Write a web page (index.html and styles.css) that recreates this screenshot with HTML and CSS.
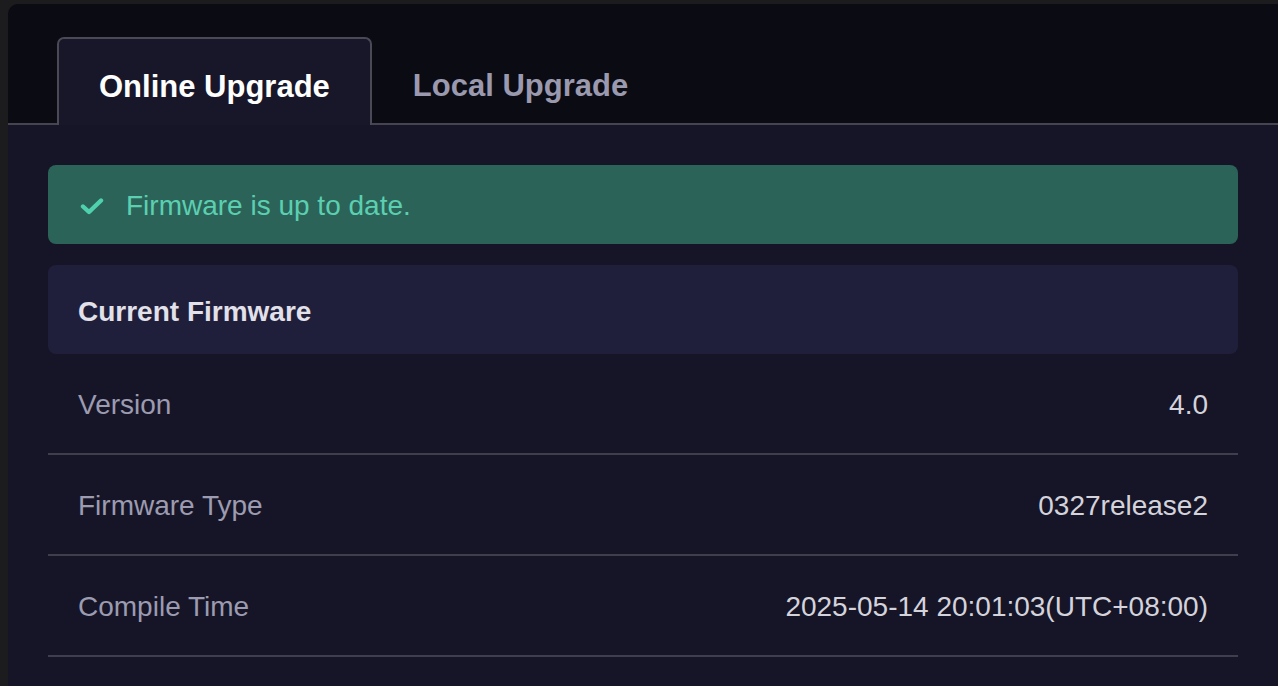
FILE: index.html
```html
<!DOCTYPE html>
<html lang="en">
<head>
<meta charset="UTF-8">
<meta name="viewport" content="width=device-width, initial-scale=1.0">
<title>Firmware Upgrade</title>
<link rel="stylesheet" href="styles.css">
</head>
<body>
    <div class="panel">
        <!-- Tabs -->
        <div class="tab-bar">
            <div class="tab active">Online Upgrade</div>
            <div class="tab">Local Upgrade</div>
        </div>

        <div class="content">
            <div class="alert">
                <svg class="check" width="24" height="18" viewBox="0 0 24 18">
                    <path d="M3 9.5 L9 15 L21 3.5" fill="none" stroke="#4fd1ae" stroke-width="4.4" stroke-linecap="round" stroke-linejoin="round"/>
                </svg>
                <span>Firmware is up to date.</span>
            </div>

            <div class="card-header">Current Firmware</div>

            <div class="info-row">
                <span class="label">Version</span>
                <span class="value">4.0</span>
            </div>
            <div class="info-row">
                <span class="label">Firmware Type</span>
                <span class="value">0327release2</span>
            </div>
            <div class="info-row">
                <span class="label">Compile Time</span>
                <span class="value">2025-05-14 20:01:03(UTC+08:00)</span>
            </div>
        </div>
    </div>
</body>
</html>
```

FILE: styles.css
```css
html, body {
height: 100%;
}

body {
margin: 0;
padding: 4px 0 0 8px;
box-sizing: border-box;
background-color: #1c1c1f;
font-family: "Liberation Sans", Arial, sans-serif;
overflow: hidden;
}

.panel {
height: 100%;
background-color: #161527;
border-top-left-radius: 10px;
overflow: hidden;
}

.tab-bar {
display: flex;
align-items: flex-end;
height: 121px;
padding-left: 49px;
background-color: #0b0b14;
border-bottom: 2px solid #45444f;
box-sizing: border-box;
}

.tab {
padding: 0 41px;
height: 86px;
line-height: 97px;
font-size: 31px;
font-weight: bold;
color: #9a99ae;
box-sizing: border-box;
}

.tab.active {
position: relative;
top: 2px;
height: 88px;
padding: 0 40px;
color: #ffffff;
background-color: #181729;
border: 2px solid #4a4956;
border-bottom: none;
border-radius: 7px 7px 0 0;
line-height: 95px;
}

.content {
padding: 40px 40px 0 40px;
}

.alert {
display: flex;
align-items: center;
height: 79px;
padding: 2px 32px 0 32px;
gap: 22px;
background-color: #2b6358;
border-radius: 8px;
color: #5ccfb1;
font-size: 28px;
box-sizing: border-box;
}

.check {
margin-top: 0;
}

.card-header {
margin-top: 21px;
height: 89px;
line-height: 93px;
padding: 0 30px;
background-color: #201f3b;
border-radius: 8px;
color: #e2e1ea;
font-size: 28px;
font-weight: bold;
}

.info-row {
display: flex;
justify-content: space-between;
align-items: center;
height: 101px;
padding: 2px 30px 0 30px;
border-bottom: 2px solid #3f3e4c;
font-size: 28px;
box-sizing: border-box;
}

.label {
color: #9c9bb0;
}

.value {
color: #d4d3dc;
}
```
